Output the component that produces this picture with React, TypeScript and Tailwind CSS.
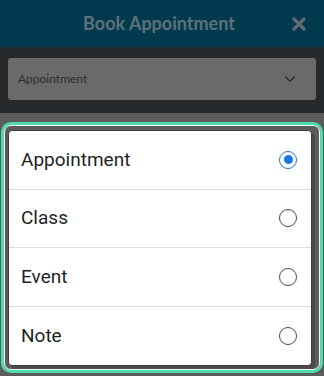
import { ChevronDown, X } from "lucide-react";

const options = ["Appointment", "Class", "Event", "Note"];

const Radio = ({ checked }: { checked: boolean }) =>
	checked ? (
		<span className="flex h-[18px] w-[18px] items-center justify-center rounded-full border-[1.5px] border-[#1b73e8]">
			<span className="h-[9px] w-[9px] rounded-full bg-[#1b73e8]" />
		</span>
	) : (
		<span className="h-[18px] w-[18px] rounded-full border-[1.5px] border-[#4a4a4a]" />
	);

export default function App() {
	return (
		<div className="flex h-[376px] w-[324px] flex-col overflow-hidden bg-[#5b5b5b] font-['Roboto',sans-serif]">
			{/* Header */}
			<div className="relative flex h-[47px] shrink-0 items-center justify-center bg-[#013a4f] pr-[6px]">
				<span className="font-['Lato',sans-serif] text-[18px] font-bold text-[#5d7178]">
					Book Appointment
				</span>
				<X className="absolute right-[15px] h-[20px] w-[20px] text-[#5f6b70]" strokeWidth={4} />
			</div>

			{/* Select */}
			<div className="h-[66px] shrink-0 bg-[#25292c] px-[8px] pt-[11px]">
				<div className="flex h-[42px] items-center justify-between rounded-[3px] bg-[#6a6a6a] pl-[10px] pr-[17px]">
					<span className="font-['Lato',sans-serif] text-[12px] text-[#2c2c2c]">Appointment</span>
					<ChevronDown className="h-[18px] w-[18px] text-[#2c2c2c]" strokeWidth={1.6} />
				</div>
			</div>

			{/* Dropdown */}
			<div className="mx-[1px] mt-[9px] rounded-[10px] border-[3px] border-[#4edbb0]">
				<div className="rounded-[7px] border border-white bg-[#5b5b5b] pb-[3px] pl-[3px] pr-[7px] pt-[4px]">
					<div className="rounded-[4px] border border-[#3e3e3e] bg-white shadow-[3px_3px_0_#4a4a4a]">
						{options.map((opt, i) => (
							<div
								key={opt}
								className={`flex h-[58.5px] items-center justify-between pl-[12px] pr-[14px] ${
									i < options.length - 1 ? "border-b border-[#dcdcdc]" : ""
								}`}
							>
								<span className="text-[19px] text-[#1f1f1f]">{opt}</span>
								<Radio checked={i === 0} />
							</div>
						))}
					</div>
				</div>
			</div>
		</div>
	);
}
